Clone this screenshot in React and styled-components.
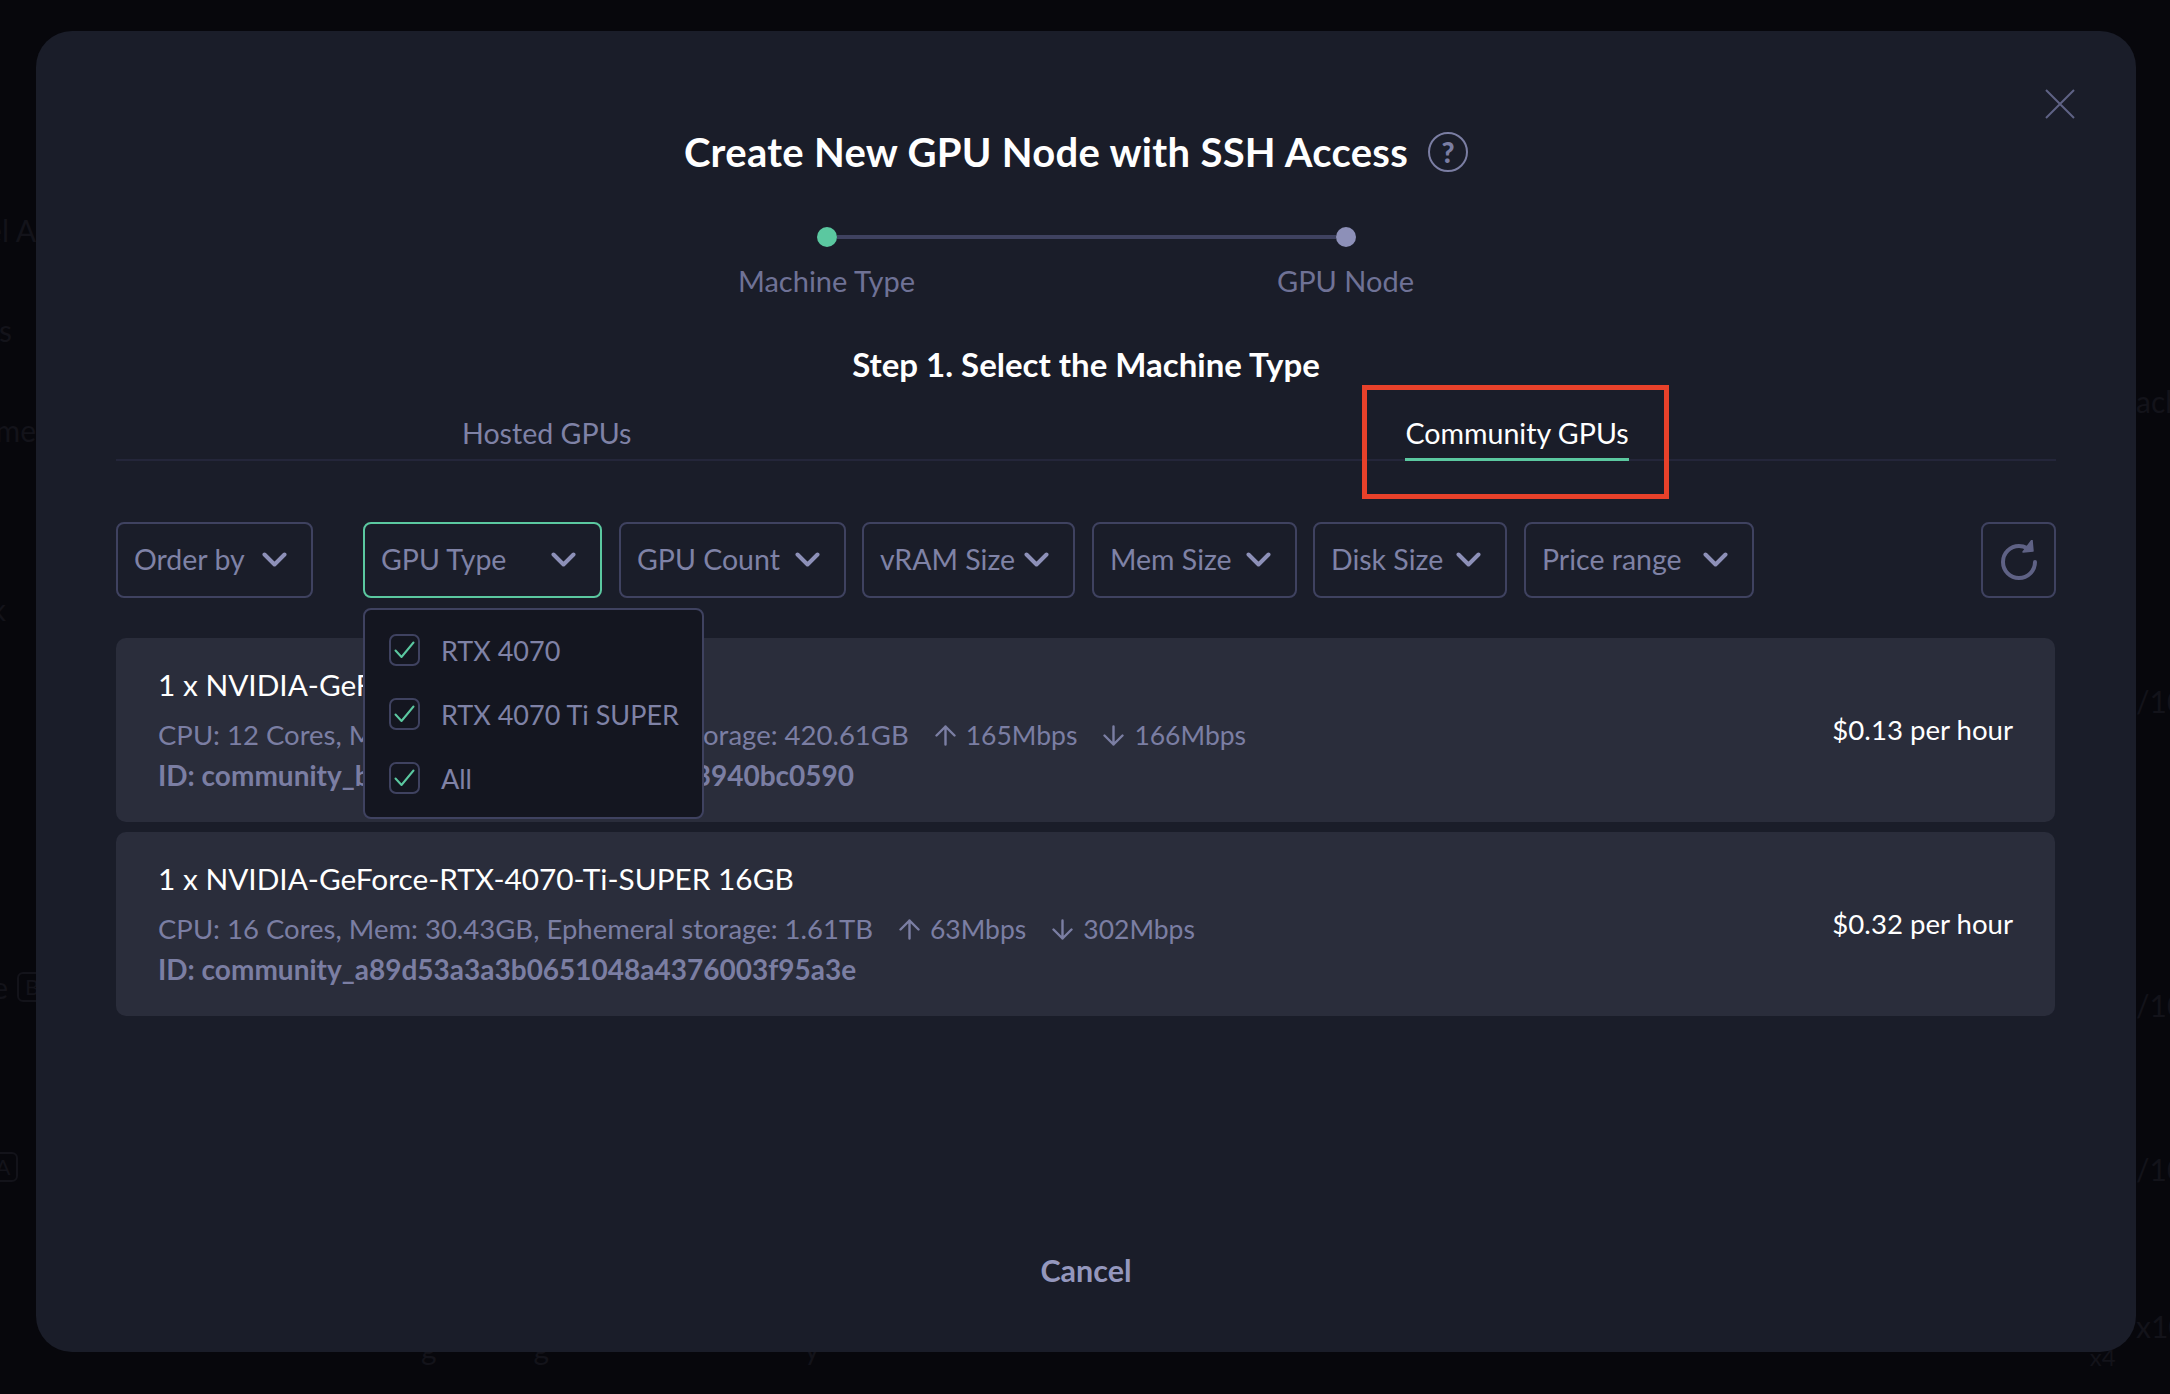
import React from 'react'
import styled, { createGlobalStyle } from 'styled-components'

const Global = createGlobalStyle`
  html, body {
    margin: 0;
    background: #07070c;
  }
  * {
    box-sizing: border-box;
  }
  body {
    font-family: 'Lato', 'Open Sans', sans-serif;
  }
`

const Page = styled.div`
  display: grid;
  grid-template-columns: 36px 2100px 34px;
  width: 2170px;
  height: 1394px;
  overflow: hidden;
`

const GhostColumn = styled.div`
  display: flex;
  flex-direction: column;
  align-items: ${p => (p.$side === 'left' ? 'flex-end' : 'flex-start')};
  color: #13131a;
  font-size: 30px;
  white-space: nowrap;
  overflow: hidden;
`

const Ghost = styled.div`
  display: flex;
  align-items: center;
  gap: 9px;
  height: 36px;
  line-height: 36px;
  flex-shrink: 0;
  margin-top: ${p => p.$top}px;
  margin-right: ${p => p.$right || 0}px;
`

const GhostBadge = styled.span`
  display: flex;
  align-items: center;
  justify-content: center;
  width: 30px;
  height: 30px;
  border: 2px solid #13131a;
  border-radius: 6px;
  font-size: 22px;
`

const Center = styled.div`
  padding-top: 31px;
`

const GhostFooter = styled.div`
  display: flex;
  height: 50px;
  margin-top: -22px;
  padding-left: 385px;
  color: #13131a;
  font-size: 30px;
`

const GhostFoot = styled.span`
  margin-left: ${p => p.$left || 0}px;
  margin-top: ${p => p.$top || 0}px;
  font-size: ${p => p.$size || 30}px;
`

const Modal = styled.div`
  position: relative;
  z-index: 1;
  display: flex;
  flex-direction: column;
  height: 1321px;
  padding: 101px 80px 65px;
  background: #1a1d29;
  border-radius: 36px;
`

const Close = styled.button`
  position: absolute;
  top: 58px;
  right: 61px;
  width: 30px;
  height: 30px;
  padding: 0;
  border: 0;
  background: none;
  line-height: 0;
`

const TitleRow = styled.div`
  display: flex;
  justify-content: center;
  align-items: center;
  gap: 20px;
  height: 40px;
  padding-right: 20px;
`

const Title = styled.h1`
  margin: 0;
  color: #fff;
  font-size: 40px;
  font-weight: 700;
  letter-spacing: 0.3px;
  white-space: nowrap;
`

const Help = styled.span`
  display: flex;
  align-items: center;
  justify-content: center;
  width: 40px;
  height: 40px;
  border: 2.5px solid #7b7ea3;
  border-radius: 50%;
  color: #7b7ea3;
  font-size: 28px;
  font-weight: 900;
`

const Track = styled.div`
  display: flex;
  align-items: center;
  width: 539px;
  margin: 55px auto 0;
`

const Dot = styled.span`
  width: 20px;
  height: 20px;
  border-radius: 50%;
  background: ${p => (p.$active ? '#5bc8a0' : '#8d90b8')};
`

const TrackLine = styled.span`
  flex: 1;
  height: 4px;
  background: #3f4260;
`

const StepLabels = styled.div`
  display: flex;
  justify-content: space-between;
  width: 719px;
  margin: 17px auto 0;
`

const StepLabel = styled.span`
  width: 200px;
  color: #6f7296;
  font-size: 29px;
  line-height: 34px;
  text-align: center;
`

const Heading = styled.h2`
  margin: 48px 0 0;
  color: #fff;
  font-size: 33px;
  font-weight: 700;
  line-height: 36px;
  text-align: center;
`

const TabBar = styled.div`
  display: flex;
  height: 79px;
  padding-left: 346px;
  border-bottom: 2px solid #24263a;
`

const Tab = styled.div`
  align-self: flex-end;
  height: 52px;
  margin-bottom: -2px;
  margin-left: ${p => p.$offset || 0}px;
  width: ${p => p.$width}px;
  color: ${p => (p.$active ? '#fff' : '#7f82a6')};
  font-size: 28.600px;
  line-height: 48px;
  text-align: center;
  white-space: nowrap;
  border-bottom: 3px solid ${p => (p.$active ? '#5bc8a0' : 'transparent')};
`

const Highlight = styled.div`
  position: absolute;
  left: 1326px;
  top: 354px;
  width: 307px;
  height: 114px;
  border: 5px solid #e8412a;
  pointer-events: none;
`

const Filters = styled.div`
  display: flex;
  gap: 18px;
  margin-top: 61px;
`

const FilterWrap = styled.div`
  position: relative;
  margin-right: ${p => p.$after || 0}px;
`

const FilterButton = styled.div`
  display: flex;
  align-items: center;
  justify-content: space-between;
  width: ${p => p.$width}px;
  height: 76px;
  padding: 0 24px 2px 16px;
  border: 2px solid ${p => (p.$open ? '#5bc8a0' : '#3f4260')};
  border-radius: 8px;
  color: #7f82a6;
  font-size: 28.500px;
  white-space: nowrap;
`

const Refresh = styled.div`
  display: flex;
  align-items: center;
  justify-content: center;
  width: 75px;
  height: 76px;
  margin-left: auto;
  border: 2px solid #3f4260;
  border-radius: 8px;
`

const Menu = styled.div`
  position: absolute;
  z-index: 2;
  top: 86px;
  left: 0;
  display: flex;
  flex-direction: column;
  gap: 32px;
  width: 341px;
  height: 211px;
  padding: 24px 24px;
  background: #141620;
  border: 2px solid #3f4260;
  border-radius: 8px;
`

const MenuRow = styled.div`
  display: flex;
  align-items: center;
  gap: 21px;
  height: 32px;
  color: #7f82a6;
  font-size: 27px;
  white-space: nowrap;
`

const Check = styled.span`
  display: flex;
  flex-shrink: 0;
  align-items: center;
  justify-content: center;
  width: 31px;
  height: 32px;
  border: 2px solid #3f4260;
  border-radius: 7px;
`

const List = styled.div`
  display: flex;
  flex-direction: column;
  gap: 10px;
  margin: 40px 1px 0 0;
`

const Card = styled.div`
  display: flex;
  align-items: center;
  justify-content: space-between;
  height: 184px;
  padding: 0 42px;
  background: #2a2d3b;
  border-radius: 10px;
`

const CardInfo = styled.div`
  padding-top: 2px;
`

const CardName = styled.div`
  color: #fff;
  font-size: 29.800px;
  line-height: 36px;
  white-space: nowrap;
`

const Specs = styled.div`
  display: flex;
  align-items: center;
  margin-top: 12px;
  color: #7b7ea3;
  font-size: 27.500px;
  line-height: 40px;
  white-space: nowrap;
`

const Speed = styled.span`
  display: flex;
  align-items: center;
  gap: 10px;
  margin-left: 26px;
  font-size: 26.500px;
`

const CardId = styled.div`
  color: #7b7ea3;
  font-size: 28px;
  font-weight: 700;
  line-height: 40px;
  white-space: nowrap;
`

const Price = styled.div`
  margin-top: -2px;
  color: #fff;
  font-size: 27.600px;
  white-space: nowrap;
`

const Cancel = styled.div`
  margin-top: auto;
  color: #9497bd;
  font-size: 30.500px;
  font-weight: 700;
  line-height: 34px;
  text-align: center;
`

const Chevron = () => (
  <svg width="25" height="15" viewBox="0 0 25 15" fill="none">
    <path d="M2.500 2.500l10 10 10-10" stroke="#8d90b8" strokeWidth="4" strokeLinecap="round" strokeLinejoin="round" />
  </svg>
)

const Tick = () => (
  <svg width="21" height="18" viewBox="0 0 21 18" fill="none">
    <path d="M1.500 9.500l6 6.500L19.500 1.500" stroke="#5bc8a0" strokeWidth="2" strokeLinecap="round" strokeLinejoin="round" />
  </svg>
)

const Arrow = ({ down }) => (
  <svg width="21" height="21" viewBox="0 0 21 21" fill="none">
    <path
      d={down ? 'M10.500 1.500v18M1.500 10.500l9 9 9-9' : 'M10.500 19.500v-18M1.500 10.500l9-9 9 9'}
      stroke="#7b7ea3"
      strokeWidth="2.400"
      strokeLinecap="round"
      strokeLinejoin="round"
    />
  </svg>
)

const filters = [
  { label: 'Order by', width: 197, after: 32 },
  { label: 'GPU Type', width: 239, after: -1 },
  { label: 'GPU Count', width: 227, after: -2 },
  { label: 'vRAM Size', width: 213, after: -1 },
  { label: 'Mem Size', width: 205, after: -2 },
  { label: 'Disk Size', width: 194, after: -1 },
  { label: 'Price range', width: 230 },
]

const options = ['RTX 4070', 'RTX 4070 Ti SUPER', 'All']

const machines = [
  {
    name: '1 x NVIDIA-GeForce-RTX-4070 12GB',
    specs: 'CPU: 12 Cores, Mem: 31.27GB, Ephemeral storage: 420.61GB',
    up: '165Mbps',
    down: '166Mbps',
    id: 'ID: community_b2c6e1f47a3d50866e1d7c3940bc0590',
    price: '$0.13 per hour',
  },
  {
    name: '1 x NVIDIA-GeForce-RTX-4070-Ti-SUPER 16GB',
    specs: 'CPU: 16 Cores, Mem: 30.43GB, Ephemeral storage: 1.61TB',
    up: '63Mbps',
    down: '302Mbps',
    id: 'ID: community_a89d53a3a3b0651048a4376003f95a3e',
    price: '$0.32 per hour',
  },
]

const App = () => (
  <Page>
    <Global />
    <GhostColumn $side="left">
      <Ghost $top={212}>Model A</Ghost>
      <Ghost $top={64} $right={24}>
        s
      </Ghost>
      <Ghost $top={64}>yme</Ghost>
      <Ghost $top={143} $right={30}>
        k
      </Ghost>
      <Ghost $top={342} $right={-11}>
        e<GhostBadge>B</GhostBadge>
      </Ghost>
      <Ghost $top={144} $right={18}>
        <GhostBadge>A</GhostBadge>
      </Ghost>
    </GhostColumn>
    <Center>
      <Modal>
        <Close>
          <svg width="30" height="30" viewBox="0 0 30 30" fill="none">
            <path d="M1 1l28 28M29 1L1 29" stroke="#5f6285" strokeWidth="2" />
          </svg>
        </Close>
        <TitleRow>
          <Title>Create New GPU Node with SSH Access</Title>
          <Help>?</Help>
        </TitleRow>
        <Track>
          <Dot $active />
          <TrackLine />
          <Dot />
        </Track>
        <StepLabels>
          <StepLabel>Machine Type</StepLabel>
          <StepLabel>GPU Node</StepLabel>
        </StepLabels>
        <Heading>Step 1. Select the Machine Type</Heading>
        <TabBar>
          <Tab $width={168}>Hosted GPUs</Tab>
          <Tab $width={224} $offset={775} $active>
            Community GPUs
          </Tab>
        </TabBar>
        <Highlight />
        <Filters>
          {filters.map(f => (
            <FilterWrap key={f.label} $after={f.after}>
              <FilterButton $width={f.width} $open={f.label === 'GPU Type'}>
                {f.label}
                <Chevron />
              </FilterButton>
              {f.label === 'GPU Type' && (
                <Menu>
                  {options.map(o => (
                    <MenuRow key={o}>
                      <Check>
                        <Tick />
                      </Check>
                      {o}
                    </MenuRow>
                  ))}
                </Menu>
              )}
            </FilterWrap>
          ))}
          <Refresh>
            <svg width="36" height="40" viewBox="0 0 36 40" fill="none">
              <path d="M34 22A16 16 0 1 1 18 6c3 0 5 .4 8 2" stroke="#5f6285" strokeWidth="4" strokeLinecap="round" />
              <path d="M31 0l1 11-10 1z" fill="#5f6285" stroke="#5f6285" strokeWidth="1.500" strokeLinejoin="round" />
            </svg>
          </Refresh>
        </Filters>
        <List>
          {machines.map(m => (
            <Card key={m.id}>
              <CardInfo>
                <CardName>{m.name}</CardName>
                <Specs>
                  {m.specs}
                  <Speed>
                    <Arrow />
                    {m.up}
                  </Speed>
                  <Speed>
                    <Arrow down />
                    {m.down}
                  </Speed>
                </Specs>
                <CardId>{m.id}</CardId>
              </CardInfo>
              <Price>{m.price}</Price>
            </Card>
          ))}
        </List>
        <Cancel>Cancel</Cancel>
      </Modal>
      <GhostFooter>
        <GhostFoot>g</GhostFoot>
        <GhostFoot $left={97}>g</GhostFoot>
        <GhostFoot $left={255}>y</GhostFoot>
        <GhostFoot $left={1270} $top={12} $size={24}>
          x4
        </GhostFoot>
      </GhostFooter>
    </Center>
    <GhostColumn $side="right">
      <Ghost $top={383}>ach</Ghost>
      <Ghost $top={264}>/100</Ghost>
      <Ghost $top={268}>/100</Ghost>
      <Ghost $top={128}>/100</Ghost>
      <Ghost $top={121}>x100</Ghost>
    </GhostColumn>
  </Page>
)

export default App
